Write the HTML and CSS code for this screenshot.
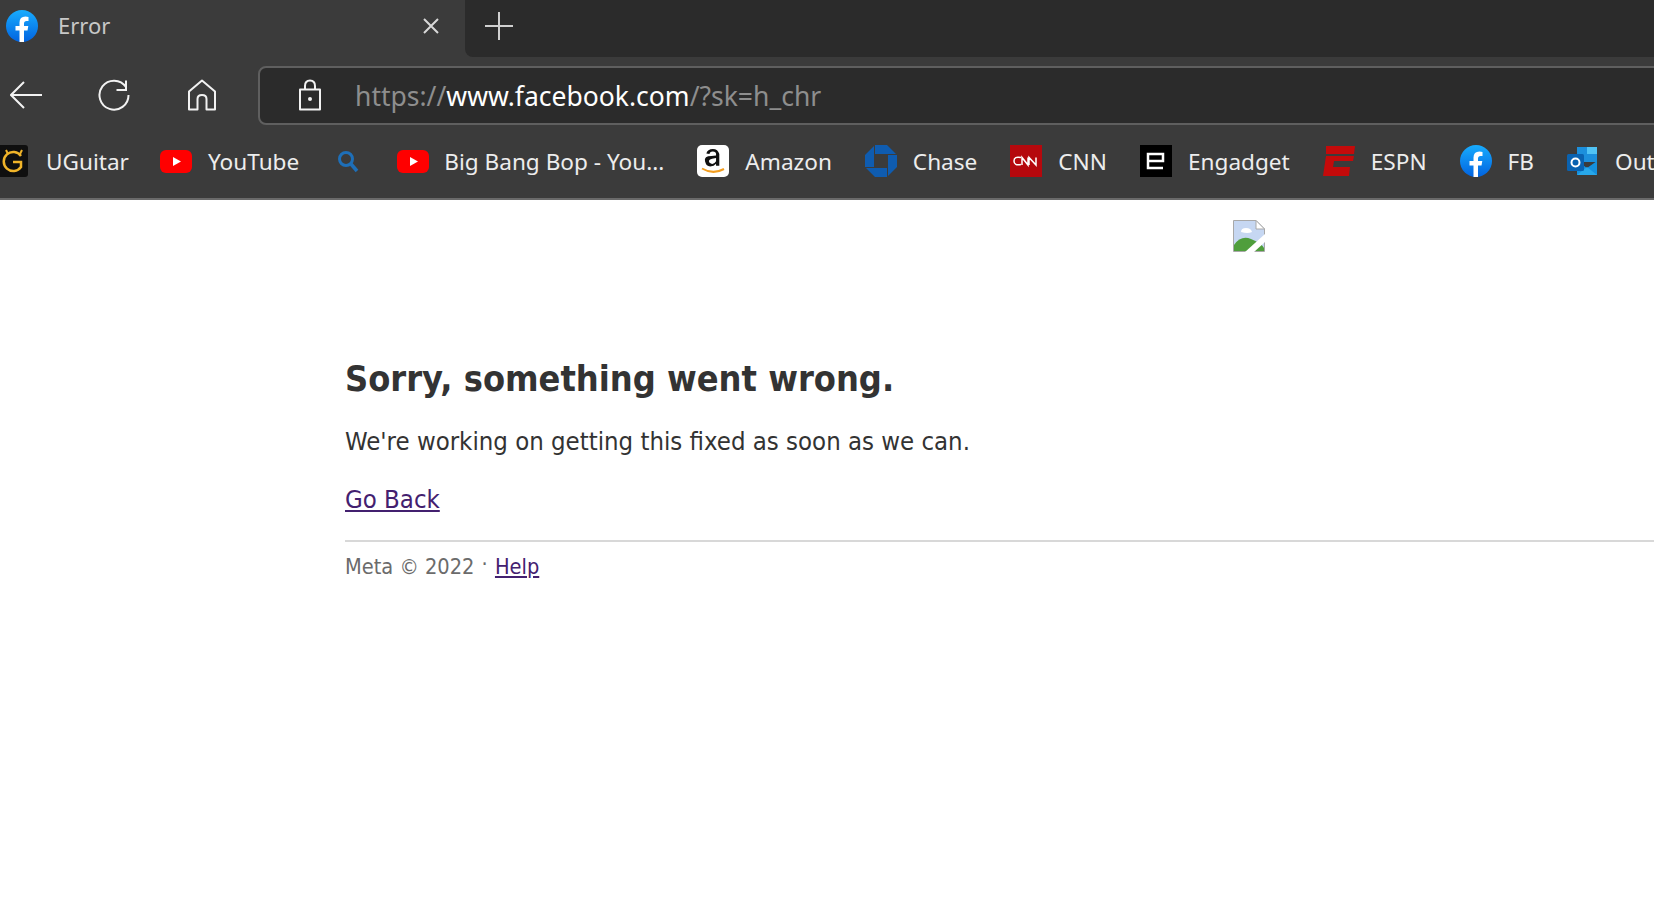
FILE: index.html
```html
<!DOCTYPE html>
<html lang="en">
<head>
    <meta charset="UTF-8">
    <meta name="viewport" content="width=device-width, initial-scale=1.0">
    <title>Error</title>
    <link rel="stylesheet" href="styles.css">
</head>
<body>
<div class="browser">
    <!-- Tab strip -->
    <div class="tabstrip">
        <div class="tab">
            <svg class="tab-icon" viewBox="0 0 32 32"><use href="#fb-logo"/></svg>
            <span class="tab-title">Error</span>
            <svg class="tab-close" viewBox="0 0 16 16"><path d="M1 1L15 15M15 1L1 15"/></svg>
        </div>
        <div class="tab-rest">
            <svg class="new-tab" viewBox="0 0 28 28"><path d="M14 0V28M0 14H28"/></svg>
        </div>
    </div>

    <!-- Toolbar -->
    <div class="toolbar">
        <svg class="nav-icon nav-back" viewBox="0 0 32 28"><path d="M1 14H32M14 1L1 14L14 27"/></svg>
        <svg class="nav-icon nav-reload" viewBox="0 0 32 32"><path d="M28 8A14.500 14.500 0 1 0 30.500 16M28 1.500V11H18.500"/></svg>
        <svg class="nav-icon nav-home" viewBox="0 0 30 32"><path d="M2 30.500H10.500V20Q10.500 16 15 16T19.500 20V30.500H28V12.500L15 1.500L2 12.500Z" stroke-linejoin="round"/></svg>
        <div class="address-bar">
            <svg class="lock" viewBox="0 0 24 32"><path d="M7 10V7Q7 1.500 12 1.500T17 7V10M2 10.500H22V30.500H2Z" stroke-linejoin="round"/><circle class="lock-dot" cx="12" cy="20" r="2"/></svg>
            <span class="url"><span class="url-dim">https://</span><span class="url-host">www.facebook.com</span><span class="url-dim">/?sk=h_chr</span></span>
        </div>
    </div>

    <!-- Favorites bar -->
    <div class="favbar">
        <a class="fav fav-first">
            <svg class="fav-icon" viewBox="0 0 32 32"><rect width="32" height="32" rx="3" fill="#0f0f0f"/><path d="M25 11A9.500 9.500 0 1 0 25 22V17H17" fill="none" stroke="#f0b429" stroke-width="2.500"/><path d="M10 5L12 9M26 5L24 9" stroke="#f0b429" stroke-width="2"/></svg>
            UGuitar
        </a>
        <a class="fav">
            <svg class="fav-icon" viewBox="0 0 32 32"><use href="#yt-logo"/></svg>
            YouTube
        </a>
        <a class="fav fav-search">
            <svg class="fav-icon" viewBox="0 0 32 32"><circle cx="14" cy="14" r="6.500" fill="none" stroke="#1e6fb8" stroke-width="3"/><path d="M19 19L25 26" stroke="#1e6fb8" stroke-width="3.500"/></svg>
        </a>
        <a class="fav fav-long">
            <svg class="fav-icon" viewBox="0 0 32 32"><use href="#yt-logo"/></svg>
            Big Bang Bop - You...
        </a>
        <a class="fav">
            <svg class="fav-icon" viewBox="0 0 32 32"><rect width="32" height="32" rx="5" fill="#fff"/><path transform="translate(-5 -6.500) scale(1.300)" d="M11 11.500Q12 8 16 8T21 12V21H18.500V19.500Q17 21.500 14 21.500T10 17.500T15 13.500L18.500 13V12Q18.500 10 16 10T13.500 12ZM18.500 15L15.500 15.500Q13 16 13 17.500T15 19.500T18.500 17.500Z" fill="#111"/><path d="M5 23.500Q16 30 27 24" fill="none" stroke="#f29d1f" stroke-width="2"/></svg>
            Amazon
        </a>
        <a class="fav">
            <svg class="fav-icon" viewBox="0 0 32 32"><g fill="#0f5cb0"><path d="M10 0H22L31 9H10Z"/><path d="M32 10V22L23 31V10Z"/><path d="M22 32H10L1 23H22Z"/><path d="M0 22V10L9 1V22Z"/></g></svg>
            Chase
        </a>
        <a class="fav">
            <svg class="fav-icon" viewBox="0 0 32 32"><rect width="32" height="32" fill="#b5080d"/><path d="M11 12.500Q4 11 4 16T11 19.500M12 20V12.500L18 20V12.500M19 20V12.500L26 20V12.500" fill="none" stroke="#fff" stroke-width="1.500"/></svg>
            CNN
        </a>
        <a class="fav">
            <svg class="fav-icon" viewBox="0 0 32 32"><rect width="32" height="32" fill="#000"/><path d="M8 16H23V9H8V23H23" fill="none" stroke="#fff" stroke-width="2.500"/></svg>
            Engadget
        </a>
        <a class="fav">
            <svg class="fav-icon" viewBox="0 0 32 32"><path d="M3 1H32L31 9H3ZM3 11H31L30 16H11L10 22H27L26 31H0Z" fill="#c40a0a"/></svg>
            ESPN
        </a>
        <a class="fav">
            <svg class="fav-icon" viewBox="0 0 32 32"><use href="#fb-logo"/></svg>
            FB
        </a>
        <a class="fav">
            <svg class="fav-icon" viewBox="0 0 32 32"><path d="M10 2H30V17H10Z" fill="#1c8fdc"/><path d="M20 2H30V9H20Z" fill="#50c3f5"/><path d="M10 16L20 23L30 16V30H10Z" fill="#1490df"/><path d="M10 30L20 22L30 30Z" fill="#28a8ea"/><rect y="9" width="17" height="17" rx="1.500" fill="#0a62b0"/><circle cx="8.500" cy="17.500" r="4" fill="none" stroke="#fff" stroke-width="2"/></svg>
            Outlook
        </a>
    </div>
</div>

<!-- Page content -->
<div class="page">
    <svg class="broken-img" viewBox="0 0 32 32">
        <path d="M.5 .5H23L31.500 9V31.500H.5Z" fill="#c6d7f2" stroke="#a8a8a8"/>
        <path d="M23 .5V9H31.500Z" fill="#fff" stroke="#a8a8a8"/>
        <path d="M8 12Q8 8 13 8T19 12Q15 14 8 12Z" fill="#fff"/>
        <path d="M1 31V25Q8 15 18 19T31 28V31Z" fill="#4f9e3c"/>
        <path d="M12 32L33 13V21L21 32Z" fill="#fff"/>
    </svg>
    <div class="content">
        <h1>Sorry, something went wrong.</h1>
        <p class="message">We're working on getting this fixed as soon as we can.</p>
        <p class="back"><a href="#">Go Back</a></p>
        <div class="footer">Meta © 2022 <span class="dot">·</span> <a href="#">Help</a></div>
    </div>
</div>

<!-- Shared logos -->
<svg class="defs" width="0" height="0">
    <defs>
        <linearGradient id="fb-grad" x1="0" y1="0" x2="0" y2="1">
            <stop offset="0" stop-color="#18acfe"/>
            <stop offset="1" stop-color="#0163e0"/>
        </linearGradient>
        <symbol id="fb-logo" viewBox="0 0 32 32">
            <circle cx="16" cy="16" r="16" fill="url(#fb-grad)"/>
            <path d="M13.500 32V20.500H9.500V16H13.500V12.500Q13.500 6.500 19.500 6.500Q21 6.500 22.500 7V11H20.500Q18 11 18 13.500V16H22.300L21.500 20.500H18V32Z" fill="#fff"/>
        </symbol>
        <symbol id="yt-logo" viewBox="0 0 32 32">
            <rect y="5" width="32" height="23" rx="6" fill="#f00"/>
            <path d="M13 12L21 16.500L13 21Z" fill="#fff"/>
        </symbol>
    </defs>
</svg>
</body>
</html>
```

FILE: styles.css
```css
html, body {
    margin: 0;
    padding: 0;
    background-color: #fff;
    overflow: hidden;
}

body {
    height: 914px;
    font-family: "Noto Sans", "Open Sans", sans-serif;
}

.defs {
    display: block;
}

svg {
    flex: none;
}

/* browser chrome */
.browser {
    background-color: #3b3b3b;
    border-bottom: 2px solid #6a6a6a;
    height: 198px;
    overflow: hidden;
}

.tabstrip {
    display: flex;
    height: 57px;
}

.tab {
    width: 465px;
    display: flex;
    align-items: center;
    box-sizing: border-box;
    padding-left: 6px;
    padding-bottom: 6px;
}

.tab-icon {
    width: 32px;
    height: 32px;
}

.tab-title {
    margin-left: 20px;
    margin-top: -2px;
    font-size: 22px;
    color: #c8c8c8;
    flex: 1;
}

.tab-close {
    width: 16px;
    height: 16px;
    margin-right: 26px;
    fill: none;
    stroke: #d8d8d8;
    stroke-width: 2;
}

.tab-rest {
    flex: 1;
    background-color: #2b2b2b;
    border-bottom-left-radius: 8px;
    display: flex;
    align-items: center;
    padding-left: 20px;
    padding-bottom: 6px;
    box-sizing: border-box;
}

.new-tab {
    width: 28px;
    height: 28px;
    fill: none;
    stroke: #d0d0d0;
    stroke-width: 2;
}

.toolbar {
    display: flex;
    align-items: center;
    height: 68px;
    padding-top: 8px;
    box-sizing: border-box;
}

.nav-icon {
    fill: none;
    stroke: #f2f2f2;
    stroke-width: 2;
}

.nav-back {
    width: 32px;
    height: 28px;
    margin-left: 10px;
}

.nav-reload {
    width: 32px;
    height: 32px;
    margin-left: 56px;
}

.nav-home {
    width: 30px;
    height: 32px;
    margin-left: 57px;
}

.address-bar {
    flex: 1;
    height: 59px;
    margin-left: 41px;
    margin-right: -20px;
    background-color: #2b2b2b;
    border: 2px solid #5f5f5f;
    border-radius: 8px;
    display: flex;
    align-items: center;
    box-sizing: border-box;
    padding-left: 38px;
}

.lock {
    width: 24px;
    height: 32px;
    fill: none;
    stroke: #f2f2f2;
    stroke-width: 2;
}

.lock-dot {
    fill: #f2f2f2;
    stroke: none;
}

.url {
    margin-left: 33px;
    margin-top: 2px;
    font-size: 26.5px;
}

.url-dim {
    color: #8e8e8e;
}

.url-host {
    color: #fff;
}

.favbar {
    display: flex;
    align-items: center;
    height: 73px;
    white-space: nowrap;
}

.fav {
    display: flex;
    align-items: center;
    gap: 16px;
    margin-left: 33px;
    margin-top: -1px;
    font-size: 22.6px;
    color: #ededed;
}

.fav-first {
    gap: 18px;
    margin-left: -4px;
    margin-right: -2px;
}

.fav-long {
    gap: 15px;
}

.fav-icon {
    width: 32px;
    height: 32px;
}

/* error page */
.page {
    color: #333;
    font-family: "DejaVu Sans", sans-serif;
    font-stretch: condensed;
}

.broken-img {
    display: block;
    width: 32px;
    height: 32px;
    margin-left: 1233px;
    margin-top: 20px;
}

.content {
    margin-left: 345px;
    margin-top: 104px;
}

h1 {
    margin: 0;
    font-size: 35.8px;
    line-height: 46px;
    font-weight: bold;
}

.message {
    margin: 21px 0 0;
    font-size: 25.5px;
    line-height: 36px;
}

.back {
    margin: 22px 0 0;
    font-size: 25.5px;
    line-height: 36px;
}

a {
    color: #43206f;
}

.footer {
    margin-top: 23px;
    border-top: 2px solid #d8d8d8;
    padding-top: 7px;
    font-size: 21.6px;
    line-height: 30px;
    color: #6b6b6b;
}

.dot {
    margin: 0 1px;
    vertical-align: 3px;
}
```
